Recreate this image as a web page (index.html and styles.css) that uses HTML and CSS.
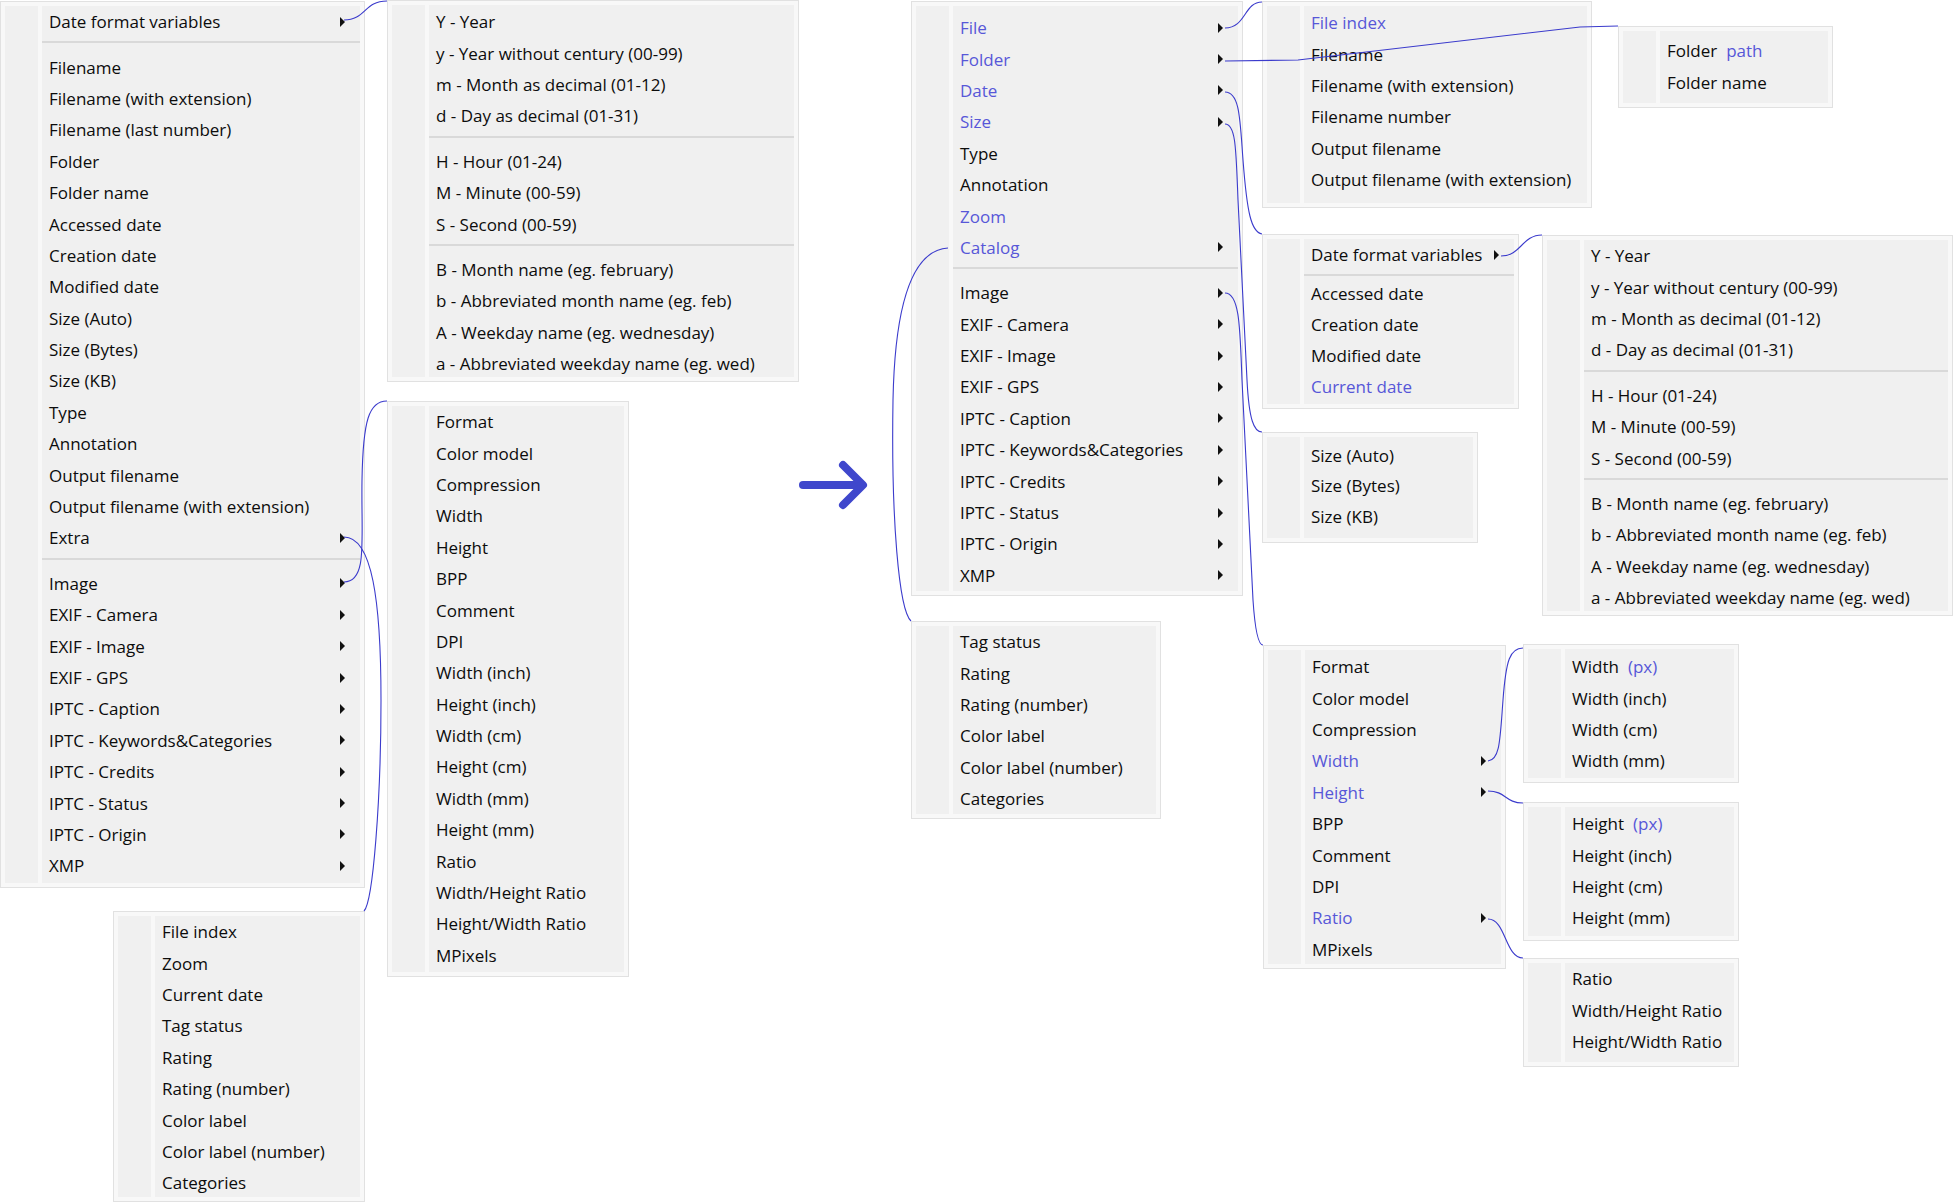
FILE: index.html
```html
<!DOCTYPE html>
<html lang="en">
<head>
<meta charset="utf-8">
<title>Menu restructuring</title>
<link rel="stylesheet" href="styles.css">
</head>
<body>
<div class="canvas">

  <!-- BEFORE -->
  <div class="menu m-a">
    <div class="gutter"></div>
    <ul class="items">
      <li class="item sub">Date format variables</li>
      <li class="sep"></li>
      <li class="item">Filename</li>
      <li class="item">Filename (with extension)</li>
      <li class="item">Filename (last number)</li>
      <li class="item">Folder</li>
      <li class="item">Folder name</li>
      <li class="item">Accessed date</li>
      <li class="item">Creation date</li>
      <li class="item">Modified date</li>
      <li class="item">Size (Auto)</li>
      <li class="item">Size (Bytes)</li>
      <li class="item">Size (KB)</li>
      <li class="item">Type</li>
      <li class="item">Annotation</li>
      <li class="item">Output filename</li>
      <li class="item">Output filename (with extension)</li>
      <li class="item sub">Extra</li>
      <li class="sep"></li>
      <li class="item sub">Image</li>
      <li class="item sub">EXIF - Camera</li>
      <li class="item sub">EXIF - Image</li>
      <li class="item sub">EXIF - GPS</li>
      <li class="item sub">IPTC - Caption</li>
      <li class="item sub">IPTC - Keywords&amp;Categories</li>
      <li class="item sub">IPTC - Credits</li>
      <li class="item sub">IPTC - Status</li>
      <li class="item sub">IPTC - Origin</li>
      <li class="item sub">XMP</li>
    </ul>
  </div>

  <div class="menu m-b">
    <div class="gutter"></div>
    <ul class="items">
      <li class="item">Y - Year</li>
      <li class="item">y - Year without century (00-99)</li>
      <li class="item">m - Month as decimal (01-12)</li>
      <li class="item">d - Day as decimal (01-31)</li>
      <li class="sep"></li>
      <li class="item">H - Hour (01-24)</li>
      <li class="item">M - Minute (00-59)</li>
      <li class="item">S - Second (00-59)</li>
      <li class="sep"></li>
      <li class="item">B - Month name (eg. february)</li>
      <li class="item">b - Abbreviated month name (eg. feb)</li>
      <li class="item">A - Weekday name (eg. wednesday)</li>
      <li class="item">a - Abbreviated weekday name (eg. wed)</li>
    </ul>
  </div>

  <div class="menu m-c">
    <div class="gutter"></div>
    <ul class="items">
      <li class="item">Format</li>
      <li class="item">Color model</li>
      <li class="item">Compression</li>
      <li class="item">Width</li>
      <li class="item">Height</li>
      <li class="item">BPP</li>
      <li class="item">Comment</li>
      <li class="item">DPI</li>
      <li class="item">Width (inch)</li>
      <li class="item">Height (inch)</li>
      <li class="item">Width (cm)</li>
      <li class="item">Height (cm)</li>
      <li class="item">Width (mm)</li>
      <li class="item">Height (mm)</li>
      <li class="item">Ratio</li>
      <li class="item">Width/Height Ratio</li>
      <li class="item">Height/Width Ratio</li>
      <li class="item">MPixels</li>
    </ul>
  </div>

  <div class="menu m-d">
    <div class="gutter"></div>
    <ul class="items">
      <li class="item">File index</li>
      <li class="item">Zoom</li>
      <li class="item">Current date</li>
      <li class="item">Tag status</li>
      <li class="item">Rating</li>
      <li class="item">Rating (number)</li>
      <li class="item">Color label</li>
      <li class="item">Color label (number)</li>
      <li class="item">Categories</li>
    </ul>
  </div>

  <!-- AFTER -->
  <div class="menu m-e">
    <div class="gutter"></div>
    <ul class="items">
      <li class="item sub new">File</li>
      <li class="item sub new">Folder</li>
      <li class="item sub new">Date</li>
      <li class="item sub new">Size</li>
      <li class="item">Type</li>
      <li class="item">Annotation</li>
      <li class="item new">Zoom</li>
      <li class="item sub new">Catalog</li>
      <li class="sep"></li>
      <li class="item sub">Image</li>
      <li class="item sub">EXIF - Camera</li>
      <li class="item sub">EXIF - Image</li>
      <li class="item sub">EXIF - GPS</li>
      <li class="item sub">IPTC - Caption</li>
      <li class="item sub">IPTC - Keywords&amp;Categories</li>
      <li class="item sub">IPTC - Credits</li>
      <li class="item sub">IPTC - Status</li>
      <li class="item sub">IPTC - Origin</li>
      <li class="item sub">XMP</li>
    </ul>
  </div>

  <div class="menu m-f">
    <div class="gutter"></div>
    <ul class="items">
      <li class="item">Tag status</li>
      <li class="item">Rating</li>
      <li class="item">Rating (number)</li>
      <li class="item">Color label</li>
      <li class="item">Color label (number)</li>
      <li class="item">Categories</li>
    </ul>
  </div>

  <div class="menu m-g">
    <div class="gutter"></div>
    <ul class="items">
      <li class="item new">File index</li>
      <li class="item">Filename</li>
      <li class="item">Filename (with extension)</li>
      <li class="item">Filename number</li>
      <li class="item">Output filename</li>
      <li class="item">Output filename (with extension)</li>
    </ul>
  </div>

  <div class="menu m-h">
    <div class="gutter"></div>
    <ul class="items">
      <li class="item sub">Date format variables</li>
      <li class="sep tight"></li>
      <li class="item">Accessed date</li>
      <li class="item">Creation date</li>
      <li class="item">Modified date</li>
      <li class="item new">Current date</li>
    </ul>
  </div>

  <div class="menu m-i">
    <div class="gutter"></div>
    <ul class="items">
      <li class="item">Size (Auto)</li>
      <li class="item">Size (Bytes)</li>
      <li class="item">Size (KB)</li>
    </ul>
  </div>

  <div class="menu m-j">
    <div class="gutter"></div>
    <ul class="items">
      <li class="item">Folder<span class="new gap">path</span></li>
      <li class="item">Folder name</li>
    </ul>
  </div>

  <div class="menu m-k">
    <div class="gutter"></div>
    <ul class="items">
      <li class="item">Y - Year</li>
      <li class="item">y - Year without century (00-99)</li>
      <li class="item">m - Month as decimal (01-12)</li>
      <li class="item">d - Day as decimal (01-31)</li>
      <li class="sep"></li>
      <li class="item">H - Hour (01-24)</li>
      <li class="item">M - Minute (00-59)</li>
      <li class="item">S - Second (00-59)</li>
      <li class="sep"></li>
      <li class="item">B - Month name (eg. february)</li>
      <li class="item">b - Abbreviated month name (eg. feb)</li>
      <li class="item">A - Weekday name (eg. wednesday)</li>
      <li class="item">a - Abbreviated weekday name (eg. wed)</li>
    </ul>
  </div>

  <div class="menu m-l">
    <div class="gutter"></div>
    <ul class="items">
      <li class="item">Format</li>
      <li class="item">Color model</li>
      <li class="item">Compression</li>
      <li class="item sub new">Width</li>
      <li class="item sub new">Height</li>
      <li class="item">BPP</li>
      <li class="item">Comment</li>
      <li class="item">DPI</li>
      <li class="item sub new">Ratio</li>
      <li class="item">MPixels</li>
    </ul>
  </div>

  <div class="menu m-m">
    <div class="gutter"></div>
    <ul class="items">
      <li class="item">Width<span class="new gap">(px)</span></li>
      <li class="item">Width (inch)</li>
      <li class="item">Width (cm)</li>
      <li class="item">Width (mm)</li>
    </ul>
  </div>

  <div class="menu m-n">
    <div class="gutter"></div>
    <ul class="items">
      <li class="item">Height<span class="new gap">(px)</span></li>
      <li class="item">Height (inch)</li>
      <li class="item">Height (cm)</li>
      <li class="item">Height (mm)</li>
    </ul>
  </div>

  <div class="menu m-o">
    <div class="gutter"></div>
    <ul class="items">
      <li class="item">Ratio</li>
      <li class="item">Width/Height Ratio</li>
      <li class="item">Height/Width Ratio</li>
    </ul>
  </div>

  <!-- connectors -->
  <svg class="wires" width="1956" height="1203" viewBox="0 0 1956 1203" aria-hidden="true">
    <g class="wire">
      <path d="M344,20 C366,20 364,1 387,1"/>
      <path d="M344,537 C372,537 381,600 381,700 C381,800 373,902 364,911"/>
      <path d="M344,582 C368,582 361,540 362,480 C363,420 369,401 387,401"/>
      <path d="M1225,28 C1246,28 1244,2 1262,2"/>
      <path d="M1225,61 L1298,60 L1580,27 L1618,26"/>
      <path d="M1225,92 C1240,92 1240,120 1243,160 C1247,212 1251,232 1262,234"/>
      <path d="M1225,124 C1236,124 1236,150 1238,200 L1247,380 C1249,420 1254,432 1262,432"/>
      <path d="M948,248 C914,250 895,300 893,400 C891,520 899,610 911,621"/>
      <path d="M1225,293 C1240,293 1240,330 1242,380 L1253,600 C1255,630 1258,645 1263,645"/>
      <path d="M1501,256 C1521,256 1522,235 1542,235"/>
      <path d="M1488,761 C1500,760 1500,740 1503,700 C1506,660 1510,648 1523,648"/>
      <path d="M1488,791 C1506,791 1505,803 1523,803"/>
      <path d="M1488,919 C1506,919 1505,958 1523,958"/>
    </g>
    <g class="big-arrow">
      <path d="M803,485 L861,485"/>
      <path d="M843,465 L863,485 L843,505"/>
    </g>
  </svg>
</div>
</body>
</html>
```

FILE: styles.css
```css
html, body {
  margin: 0;
  padding: 0;
  background: #ffffff;
}

.canvas {
  position: relative;
  width: 1956px;
  height: 1203px;
  overflow: hidden;
  font-family: "Open Sans", "Noto Sans", sans-serif;
  font-size: 17px;
  color: #0c0c0c;
}

.menu {
  position: absolute;
  box-sizing: border-box;
  display: flex;
  gap: 4px;
  padding: 4px;
  background: #f8f8f8;
  border: 1px solid #e1e1e1;
}

.gutter {
  flex: none;
  width: 33px;
  background: #f0f0f0;
}

.items {
  flex: 1;
  min-width: 0;
  margin: 0;
  padding: 0;
  list-style: none;
  background: #f0f0f0;
}

.item {
  display: flex;
  align-items: center;
  height: 31.4px;
  padding-left: 7px;
  white-space: nowrap;
}

.item.sub::after {
  content: "";
  margin-left: auto;
  margin-right: 15px;
  width: 0;
  height: 0;
  border-left: 5px solid #111111;
  border-top: 5px solid transparent;
  border-bottom: 5px solid transparent;
}

.new {
  color: #5757d8;
}

.gap {
  margin-left: 9px;
}

.sep {
  height: 2px;
  margin: 4px 0 8px;
  background: #d9d9d9;
}

.sep.tight {
  margin-bottom: 2px;
}

/* diagram node placement */
.m-a { left: 0;      top: 1px;   width: 365px; height: 887px; }
.m-b { left: 387px;  top: 0;     width: 412px; height: 382px; }
.m-b .items { padding-top: 1px; }
.m-c { left: 387px;  top: 401px; width: 242px; height: 576px; }
.m-d { left: 113px;  top: 911px; width: 252px; height: 291px; }

.m-e { left: 911px;  top: 1px;   width: 332px; height: 595px; }
.m-e .items { padding-top: 6px; }
.m-f { left: 911px;  top: 621px; width: 250px; height: 198px; }
.m-g { left: 1262px; top: 1px;   width: 330px; height: 207px; }
.m-g .items { padding-top: 1px; }
.m-h { left: 1262px; top: 234px; width: 257px; height: 175px; }
.m-h .item { height: 31px; }
.m-i { left: 1262px; top: 432px; width: 216px; height: 111px; }
.m-i .items { padding-top: 3px; }
.m-i .item { height: 30.5px; }
.m-j { left: 1618px; top: 26px;  width: 215px; height: 82px; }
.m-j .items { padding-top: 3px; }
.m-j .item { height: 32px; }
.m-k { left: 1542px; top: 235px; width: 411px; height: 381px; }
.m-l { left: 1263px; top: 645px; width: 243px; height: 324px; }
.m-l .items { padding-top: 1px; }
.m-m { left: 1523px; top: 644px; width: 216px; height: 139px; }
.m-m .items { padding-top: 2px; }
.m-n { left: 1523px; top: 802px; width: 216px; height: 139px; }
.m-n .items { padding-top: 1px; }
.m-o { left: 1523px; top: 958px; width: 216px; height: 109px; }

.wires {
  position: absolute;
  left: 0;
  top: 0;
  pointer-events: none;
}

.wire path {
  fill: none;
  stroke: #3b3bcc;
  stroke-width: 1.1;
}

.big-arrow path {
  fill: none;
  stroke: #3f47cc;
  stroke-width: 8;
  stroke-linecap: round;
  stroke-linejoin: round;
}
```
